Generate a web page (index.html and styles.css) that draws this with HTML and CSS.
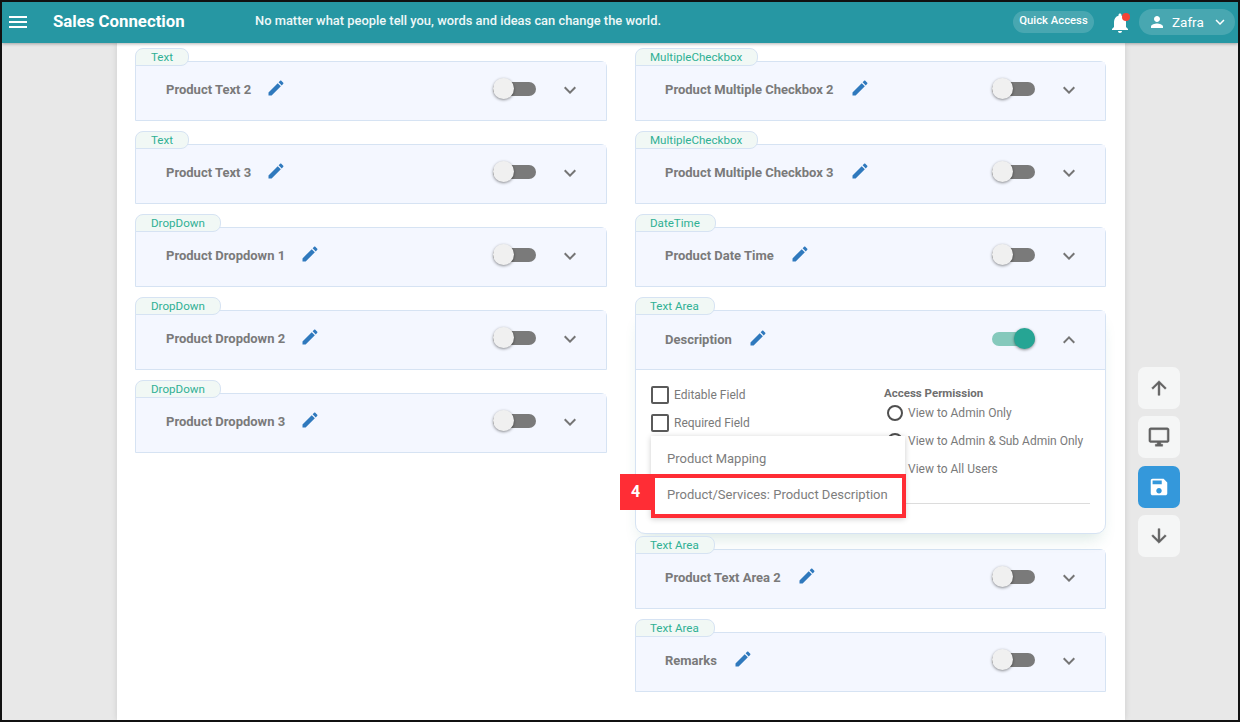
FILE: index.html
```html
<!DOCTYPE html>
<html lang="en">
<head>
    <meta charset="UTF-8">
    <title>Sales Connection</title>
    <link rel="stylesheet" href="styles.css">
</head>
<body>
    <svg class="defs" width="0" height="0">
        <symbol id="edit" viewBox="0 0 24 24"><path d="M3 17.25V21h3.75L17.81 9.94l-3.75-3.75L3 17.25zM20.71 7.04c.39-.39.39-1.02 0-1.41l-2.34-2.34c-.39-.39-1.02-.39-1.41 0l-1.83 1.83 3.75 3.75 1.83-1.83z"/></symbol>
        <symbol id="down" viewBox="0 0 24 24"><path d="M16.59 8.59L12 13.17 7.41 8.59 6 10l6 6 6-6z"/></symbol>
        <symbol id="up" viewBox="0 0 24 24"><path d="M12 8l-6 6 1.41 1.41L12 10.83l4.59 4.58L18 14z"/></symbol>
    </svg>

    <div class="frame">
        <header class="topbar">
            <div class="burger"><span></span><span></span><span></span></div>
            <div class="brand">Sales Connection</div>
            <div class="tagline">No matter what people tell you, words and ideas can change the world.</div>
            <div class="quick">Quick Access</div>
            <div class="bell">
                <svg viewBox="0 0 24 24"><path d="M12 22c1.1 0 2-.9 2-2h-4c0 1.1.89 2 2 2zm6-6v-5c0-3.07-1.64-5.64-4.5-6.32V4c0-.83-.67-1.5-1.5-1.5s-1.5.67-1.5 1.5v.68C7.63 5.36 6 7.92 6 11v5l-2 2v1h16v-1l-2-2z"/></svg>
                <span class="dot"></span>
            </div>
            <div class="user">
                <svg viewBox="0 0 24 24"><path d="M12 12c2.21 0 4-1.79 4-4s-1.79-4-4-4-4 1.79-4 4 1.79 4 4 4zm0 2c-2.67 0-8 1.34-8 4v2h16v-2c0-2.66-5.33-4-8-4z"/></svg>
                <span class="user-name">Zafra</span>
                <svg class="user-arrow" viewBox="0 0 24 24"><path d="M16.59 8.59L12 13.17 7.41 8.59 6 10l6 6 6-6z"/></svg>
            </div>
        </header>

        <div class="workspace">
            <main class="panel">
                <div class="column">
                    <div class="field">
                        <div class="tag">Text</div>
                        <div class="card"><div class="card-head">
                            <span class="name">Product Text 2</span>
                            <svg class="pencil"><use href="#edit"/></svg>
                            <span class="toggle"><span class="knob"></span></span>
                            <svg class="chevron"><use href="#down"/></svg>
                        </div></div>
                    </div>
                    <div class="field">
                        <div class="tag">Text</div>
                        <div class="card"><div class="card-head">
                            <span class="name">Product Text 3</span>
                            <svg class="pencil"><use href="#edit"/></svg>
                            <span class="toggle"><span class="knob"></span></span>
                            <svg class="chevron"><use href="#down"/></svg>
                        </div></div>
                    </div>
                    <div class="field">
                        <div class="tag">DropDown</div>
                        <div class="card"><div class="card-head">
                            <span class="name">Product Dropdown 1</span>
                            <svg class="pencil"><use href="#edit"/></svg>
                            <span class="toggle"><span class="knob"></span></span>
                            <svg class="chevron"><use href="#down"/></svg>
                        </div></div>
                    </div>
                    <div class="field">
                        <div class="tag">DropDown</div>
                        <div class="card"><div class="card-head">
                            <span class="name">Product Dropdown 2</span>
                            <svg class="pencil"><use href="#edit"/></svg>
                            <span class="toggle"><span class="knob"></span></span>
                            <svg class="chevron"><use href="#down"/></svg>
                        </div></div>
                    </div>
                    <div class="field">
                        <div class="tag">DropDown</div>
                        <div class="card"><div class="card-head">
                            <span class="name">Product Dropdown 3</span>
                            <svg class="pencil"><use href="#edit"/></svg>
                            <span class="toggle"><span class="knob"></span></span>
                            <svg class="chevron"><use href="#down"/></svg>
                        </div></div>
                    </div>
                </div>

                <div class="column column-right">
                    <div class="field">
                        <div class="tag">MultipleCheckbox</div>
                        <div class="card"><div class="card-head">
                            <span class="name">Product Multiple Checkbox 2</span>
                            <svg class="pencil"><use href="#edit"/></svg>
                            <span class="toggle"><span class="knob"></span></span>
                            <svg class="chevron"><use href="#down"/></svg>
                        </div></div>
                    </div>
                    <div class="field">
                        <div class="tag">MultipleCheckbox</div>
                        <div class="card"><div class="card-head">
                            <span class="name">Product Multiple Checkbox 3</span>
                            <svg class="pencil"><use href="#edit"/></svg>
                            <span class="toggle"><span class="knob"></span></span>
                            <svg class="chevron"><use href="#down"/></svg>
                        </div></div>
                    </div>
                    <div class="field">
                        <div class="tag">DateTime</div>
                        <div class="card"><div class="card-head">
                            <span class="name">Product Date Time</span>
                            <svg class="pencil"><use href="#edit"/></svg>
                            <span class="toggle"><span class="knob"></span></span>
                            <svg class="chevron"><use href="#down"/></svg>
                        </div></div>
                    </div>
                    <div class="field field-open">
                        <div class="tag">Text Area</div>
                        <div class="card card-open">
                            <div class="card-head">
                                <span class="name">Description</span>
                                <svg class="pencil"><use href="#edit"/></svg>
                                <span class="toggle toggle-on"><span class="knob"></span></span>
                                <svg class="chevron"><use href="#up"/></svg>
                            </div>
                            <div class="card-body">
                                <div class="options">
                                    <div class="checks">
                                        <label class="check"><span class="box"></span>Editable Field</label>
                                        <label class="check"><span class="box"></span>Required Field</label>
                                    </div>
                                    <div class="access">
                                        <div class="access-title">Access Permission</div>
                                        <label class="radio"><span class="circle"></span>View to Admin Only</label>
                                        <label class="radio"><span class="circle"></span>View to Admin &amp; Sub Admin Only</label>
                                        <label class="radio"><span class="circle"></span>View to All Users</label>
                                    </div>
                                </div>
                                <div class="divider"></div>
                            </div>
                            <div class="menu">
                                <div class="menu-item">Product Mapping</div>
                                <div class="menu-item menu-item-marked">Product/Services: Product Description</div>
                                <div class="step">4</div>
                            </div>
                        </div>
                    </div>
                    <div class="field">
                        <div class="tag">Text Area</div>
                        <div class="card"><div class="card-head">
                            <span class="name">Product Text Area 2</span>
                            <svg class="pencil"><use href="#edit"/></svg>
                            <span class="toggle"><span class="knob"></span></span>
                            <svg class="chevron"><use href="#down"/></svg>
                        </div></div>
                    </div>
                    <div class="field">
                        <div class="tag">Text Area</div>
                        <div class="card"><div class="card-head">
                            <span class="name">Remarks</span>
                            <svg class="pencil"><use href="#edit"/></svg>
                            <span class="toggle"><span class="knob"></span></span>
                            <svg class="chevron"><use href="#down"/></svg>
                        </div></div>
                    </div>
                </div>
            </main>

            <div class="float-btns">
                <div class="float-btn"><svg viewBox="0 0 24 24"><path d="M4 12l1.41 1.41L11 7.83V20h2V7.83l5.58 5.59L20 12l-8-8-8 8z"/></svg></div>
                <div class="float-btn"><svg viewBox="0 0 24 24"><path d="M21 2H3c-1.1 0-2 .9-2 2v12c0 1.1.9 2 2 2h7v2H8v2h8v-2h-2v-2h7c1.1 0 2-.9 2-2V4c0-1.1-.9-2-2-2zm0 14H3V4h18v12z"/></svg></div>
                <div class="float-btn float-btn-save"><svg viewBox="0 0 24 24"><path d="M17 3H5c-1.11 0-2 .9-2 2v14c0 1.1.89 2 2 2h14c1.1 0 2-.9 2-2V7l-4-4zm-5 16c-1.66 0-3-1.34-3-3s1.34-3 3-3 3 1.34 3 3-1.34 3-3 3zm3-10H5V5h10v4z"/></svg></div>
                <div class="float-btn"><svg viewBox="0 0 24 24"><path d="M20 12l-1.41-1.41L13 16.17V4h-2v12.17l-5.58-5.59L4 12l8 8 8-8z"/></svg></div>
            </div>
        </div>
    </div>
</body>
</html>
```

FILE: styles.css
```css
body {
    margin: 0;
    padding: 0;
    background: white;
    font-family: Roboto, "Liberation Sans", sans-serif;
    color: #7a7a7a;
}

.defs {
    position: absolute;
}

.frame {
    width: 1240px;
    height: 722px;
    box-sizing: border-box;
    border: 2px solid #111;
    display: flex;
    flex-direction: column;
    overflow: hidden;
}

/* Top bar */
.topbar {
    height: 41px;
    box-sizing: border-box;
    padding-bottom: 2px;
    flex: none;
    background: #2697a3;
    color: white;
    display: flex;
    align-items: center;
    box-shadow: 0 1px 3px rgba(0, 0, 0, 0.3);
    position: relative;
    z-index: 5;
}

.burger {
    width: 18px;
    margin-left: 7px;
    display: flex;
    flex-direction: column;
    gap: 3px;
}

.burger span {
    height: 2px;
    background: white;
}

.brand {
    margin-left: 26px;
    padding-bottom: 2px;
    font-size: 16.8px;
    font-weight: 700;
    width: 202px;
    white-space: nowrap;
}

.tagline {
    padding-bottom: 2px;
    font-size: 12.9px;
    font-weight: 500;
    flex: 1;
    color: #eef7f8;
}

.quick {
    width: 81px;
    height: 22px;
    line-height: 20px;
    border-radius: 11px;
    background: rgba(255, 255, 255, 0.16);
    font-size: 11.3px;
    font-weight: 500;
    text-align: center;
}

.bell {
    width: 20px;
    height: 24px;
    margin-left: 16px;
    margin-top: 2px;
    position: relative;
}

.bell svg {
    width: 24px;
    height: 24px;
    fill: white;
    margin-left: -2px;
}

.dot {
    position: absolute;
    top: 2px;
    right: 0;
    width: 8px;
    height: 8px;
    border-radius: 50%;
    background: #f44336;
}

.user {
    width: 96px;
    height: 26px;
    margin-left: 9px;
    margin-right: 3px;
    border-radius: 13px;
    background: rgba(255, 255, 255, 0.16);
    display: flex;
    align-items: center;
    font-size: 13.5px;
}

.user svg {
    width: 18px;
    height: 18px;
    fill: white;
    margin-left: 9px;
}

.user-name {
    margin-left: 6px;
    flex: 1;
}

.user .user-arrow {
    margin: 0 6px 0 0;
}

/* Main area */
.workspace {
    flex: 1;
    min-height: 0;
    background: #e8e8e8;
    position: relative;
}

.panel {
    width: 1008px;
    height: 100%;
    box-sizing: border-box;
    margin-left: 115px;
    padding: 5px 18px 0;
    background: white;
    display: flex;
    gap: 28px;
    box-shadow: 0 0 6px rgba(0, 0, 0, 0.12);
}

.column {
    width: 472px;
}

.column-right {
    width: 471px;
}

.field {
    margin-bottom: 10px;
}

.field-open {
    margin-bottom: 2px;
}

.tag {
    width: fit-content;
    height: 18px;
    line-height: 16px;
    box-sizing: border-box;
    padding: 0 15px;
    background: #f1f8f5;
    border: 1px solid #d6e3f3;
    border-radius: 8px 8px 8px 0;
    color: #2fb094;
    font-size: 11.6px;
    position: relative;
    z-index: 1;
}

.column-right .tag {
    padding-left: 14px;
}

.card {
    margin-top: -5px;
    background: #f4f7ff;
    border: 1px solid #d6e3f3;
    border-radius: 0 6px 0 0;
    box-sizing: border-box;
}

.card-open {
    background: white;
    border-radius: 0 6px 10px 10px;
    height: 224px;
    position: relative;
    box-shadow: 0 10px 16px -6px rgba(40, 120, 100, 0.18);
}

.card-head {
    height: 58px;
    box-sizing: border-box;
    display: flex;
    align-items: center;
    padding: 0 24px 0 30px;
    background: #f4f7ff;
}

.column-right .card-head {
    padding-left: 29px;
}

.card-open .card-head {
    height: 59px;
    padding-top: 2px;
    border-bottom: 1px solid #d6e3f3;
}

.name {
    font-size: 13px;
    font-weight: 700;
    color: #7a7a7a;
    padding-bottom: 4px;
}

.pencil {
    width: 20px;
    height: 20px;
    margin-left: 15px;
    margin-top: -6px;
    fill: #2f79bd;
}

.column-right .pencil {
    margin-left: 16px;
}

.toggle {
    margin-left: auto;
    width: 43px;
    height: 14px;
    border-radius: 7px;
    background: #7a7a7a;
    position: relative;
    margin-top: -4px;
}

.knob {
    position: absolute;
    left: 0;
    top: -4px;
    width: 21px;
    height: 21px;
    border-radius: 50%;
    background: #f0f0f0;
    box-shadow: 0 1px 3px rgba(0, 0, 0, 0.45);
}

.toggle-on {
    background: #85c9bc;
}

.toggle-on .knob {
    left: 22px;
    background: #26a594;
}

.chevron {
    width: 24px;
    height: 24px;
    margin-left: 22px;
    margin-top: -3px;
    fill: #757575;
}

/* Expanded card */
.card-body {
    padding: 16px 15px 0;
}

.options {
    display: flex;
    height: 117px;
}

.checks {
    width: 233px;
}

.check {
    display: flex;
    align-items: center;
    font-size: 12px;
    height: 18px;
    margin-bottom: 10px;
}

.box {
    width: 18px;
    height: 18px;
    box-sizing: border-box;
    border: 2px solid #5a5a5a;
    border-radius: 2px;
    margin-right: 5px;
}

.access-title {
    font-size: 11.5px;
    font-weight: 700;
    color: #6f6f6f;
    height: 19px;
    line-height: 14px;
}

.radio {
    display: flex;
    align-items: center;
    font-size: 12px;
    height: 16px;
    margin: 0 0 12px 3px;
}

.circle {
    width: 16px;
    height: 16px;
    box-sizing: border-box;
    border: 2px solid #4f4f4f;
    border-radius: 50%;
    margin-right: 5px;
}

.divider {
    width: 439px;
    height: 1px;
    background: #dcdcdc;
}

/* Dropdown over the card */
.menu {
    position: absolute;
    left: 15px;
    top: 125px;
    width: 254px;
    background: white;
    box-shadow: 0 1px 6px rgba(0, 0, 0, 0.2);
    z-index: 2;
    color: #7d7d7d;
    font-size: 13px;
}

.menu-item {
    height: 38px;
    line-height: 45px;
    padding-left: 16px;
}

.menu-item-marked {
    height: 44px;
    width: 255px;
    box-sizing: border-box;
    line-height: 34px;
    padding-left: 12px;
    border: 4px solid #ff2d35;
}

.step {
    position: absolute;
    left: -31px;
    top: 38px;
    width: 31px;
    height: 36px;
    line-height: 36px;
    background: #ff2d35;
    color: white;
    font-size: 16px;
    font-weight: 700;
    text-align: center;
}

/* Floating buttons */
.float-btns {
    position: absolute;
    left: 1136px;
    top: 324px;
    display: flex;
    flex-direction: column;
    gap: 7.3px;
}

.float-btn {
    width: 42px;
    height: 42px;
    border-radius: 7px;
    background: #f5f6f6;
    display: flex;
    align-items: center;
    justify-content: center;
}

.float-btn svg {
    width: 22px;
    height: 22px;
    fill: #616161;
    stroke: #616161;
    stroke-width: 0.5;
}

.float-btn-save {
    background: #3498db;
}

.float-btn-save svg {
    fill: white;
    stroke: none;
}
```
